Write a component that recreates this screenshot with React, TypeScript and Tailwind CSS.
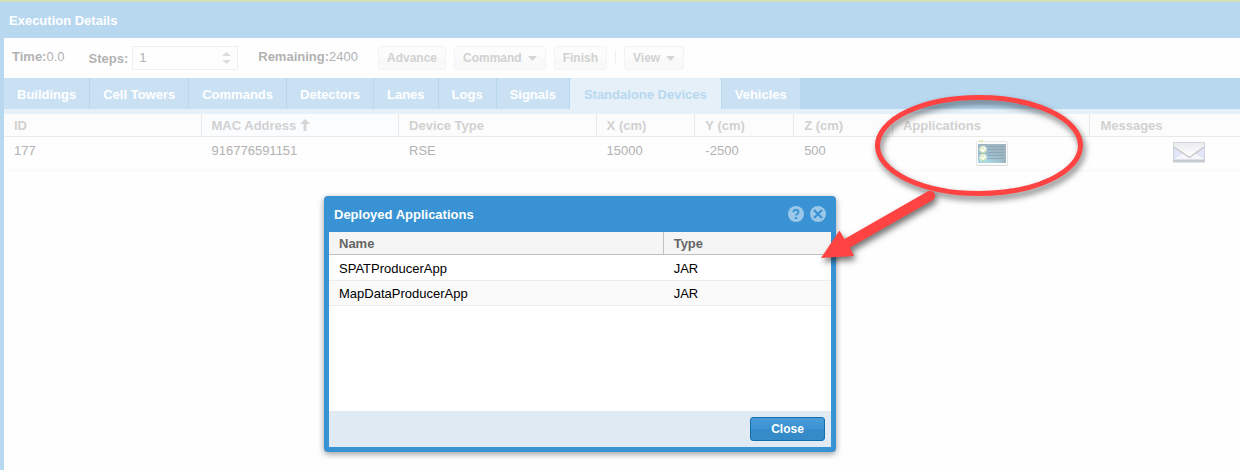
import React from "react";

const tabs = [
  "Buildings",
  "Cell Towers",
  "Commands",
  "Detectors",
  "Lanes",
  "Logs",
  "Signals",
  "Standalone Devices",
  "Vehicles",
];

const columns = [
  { title: "ID", width: "w-2/13" },
  { title: "MAC Address", width: "w-2/13" },
  { title: "Device Type", width: "w-2/13" },
  { title: "X (cm)", width: "w-1/13" },
  { title: "Y (cm)", width: "w-1/13" },
  { title: "Z (cm)", width: "w-1/13" },
  { title: "Applications", width: "w-2/13" },
  { title: "Messages", width: "w-2/13" },
];

const device = ["177", "916776591151", "RSE", "15000", "-2500", "500"];

const apps = [
  { name: "SPATProducerApp", type: "JAR" },
  { name: "MapDataProducerApp", type: "JAR" },
];

function ToolButton({ label, menu = false }: { label: string; menu?: boolean }) {
  return (
    <button
      type="button"
      className="flex h-6 items-center gap-1.5 rounded-[3px] border border-[#f3f3f3] bg-linear-to-b from-[#fcfcfc] from-50% to-[#f9f9f9] to-50% px-2 text-xs font-bold text-[#d1d1d1]"
    >
      {label}
      {menu && (
        <svg width="9" height="5" viewBox="0 0 9 5" aria-hidden="true">
          <path d="M0 0h9L4.500 5z" fill="#d6d6d6" />
        </svg>
      )}
    </button>
  );
}

function ChecklistIcon() {
  return (
    <svg width="32" height="27" viewBox="0 0 32 27" aria-hidden="true">
      <defs>
        <linearGradient id="board" x1="0" y1="0" x2="0" y2="1">
          <stop offset="0" stopColor="#9fb6c3" />
          <stop offset="0.5" stopColor="#9bbdce" />
          <stop offset="1" stopColor="#abdaea" />
        </linearGradient>
        <linearGradient id="shade" x1="0" y1="0" x2="1" y2="0">
          <stop offset="0.4" stopColor="#9fb6c3" stopOpacity="0" />
          <stop offset="1" stopColor="#9fb3c0" />
        </linearGradient>
      </defs>
      <rect x="0.500" y="1.500" width="31" height="24" rx="1" fill="#fbfbfb" stroke="#e6e6e6" />
      <path d="M1 25.500h30" stroke="#d8d8d8" />
      <path d="M3 1h1M5 1h2" stroke="#d2eda0" strokeWidth="2" />
      <rect x="2" y="4" width="28" height="19" fill="url(#board)" />
      <rect x="2" y="4" width="28" height="19" fill="url(#shade)" />
      <path d="M12 6.500h16M12 9.500h16M12 12.500h16M12 15.500h16M12 18.500h16" stroke="#8ea8b6" />
      <circle cx="7" cy="9.500" r="3.200" fill="#dcecc4" stroke="#eef6df" />
      <circle cx="7" cy="17.500" r="3.200" fill="#dcecc4" stroke="#eef6df" />
      <path d="M5.300 9.500l1.500 1.600 3-3.600M5.300 17.500l1.500 1.600 3-3.600" fill="none" stroke="#fff" strokeWidth="1.400" />
      <path d="M4.500 11.500q2.500 2.500 5 0M4.500 19.500q2.500 2.500 5 0" fill="none" stroke="#bfe39b" />
    </svg>
  );
}

function EnvelopeIcon() {
  return (
    <svg width="32" height="21" viewBox="0 0 32 21" aria-hidden="true">
      <defs>
        <linearGradient id="flap" x1="0" y1="0" x2="0" y2="1">
          <stop offset="0" stopColor="#ebecef" />
          <stop offset="1" stopColor="#fff" />
        </linearGradient>
      </defs>
      <rect x="0.500" y="0.500" width="31" height="19" fill="#f5f6fb" stroke="#d0d4dc" />
      <path d="M1 5l9 6.500L1 17zM31 5l-9 6.500 9 5.500z" fill="#e0e6f8" />
      <path d="M1 1h30v4L16.500 15.500 1 5z" fill="url(#flap)" />
      <path d="M1 5l15.500 10.500L31 5" fill="none" stroke="#c4c4c4" strokeWidth="1.200" />
      <path d="M0 18.500h32" stroke="#c4c8cf" strokeWidth="2" />
      <path d="M0 20.500h32" stroke="#e3e4e6" />
    </svg>
  );
}

function DevicePanel() {
  return (
    <main className="flex min-h-screen flex-col border-t-2 border-[#d4dfbc] bg-[#b8d8ef]">
      <h1 className="flex h-9 items-center px-[9px] pt-0.5 text-[13px] font-bold text-white">
        Execution Details
      </h1>
      <div className="ml-1 flex-1 overflow-hidden bg-[#fefefe]">
        <div className="flex h-10 items-center gap-2 pl-2 text-[13px] text-[#b2b2b2]">
          <p className="mb-0.5 mr-4">
            <b>Time:</b>0.0
          </p>
          <label htmlFor="steps" className="-mr-1 pt-0.5 font-bold">
            Steps:
          </label>
          <div className="mr-3 flex h-6 w-[106px] items-center border border-[#efefef] pl-1.5 pr-1.5">
            <input
              id="steps"
              type="number"
              defaultValue={1}
              className="w-full min-w-0 outline-none [appearance:textfield] [&::-webkit-inner-spin-button]:appearance-none"
            />
            <div className="flex flex-col gap-1">
              <button type="button" aria-label="Increase steps">
                <svg width="9" height="4" viewBox="0 0 9 4" className="block">
                  <path d="M0 4h9L4.500 0z" fill="#dcdcdc" />
                </svg>
              </button>
              <button type="button" aria-label="Decrease steps">
                <svg width="9" height="4" viewBox="0 0 9 4" className="block">
                  <path d="M0 0h9L4.500 4z" fill="#dcdcdc" />
                </svg>
              </button>
            </div>
          </div>
          <p className="mb-0.5 mr-3">
            <b>Remaining:</b>2400
          </p>
          <ToolButton label="Advance" />
          <ToolButton label="Command" menu />
          <ToolButton label="Finish" />
          <span className="h-3.5 w-px bg-[#f0f0f0]" />
          <ToolButton label="View" menu />
        </div>

        <div role="tablist" className="flex h-9 gap-px border-b-5 border-[#e5f0f9] bg-[#b8d8ef]">
          {tabs.map((tab) => {
            const active = tab === "Standalone Devices";
            return (
              <button
                key={tab}
                type="button"
                role="tab"
                aria-selected={active}
                className={
                  "rounded-t-[2px] pt-0.5 text-[13px] font-bold " +
                  (active ? "bg-[#e5f0f9] px-3.5 text-[#b8d8ef]" : "bg-[#cae1f4] px-[13px] text-white")
                }
              >
                {tab}
              </button>
            );
          })}
        </div>

        <table className="w-[calc(100%+48px)] table-fixed border-separate border-spacing-0 text-left text-[13px]">
          <thead>
            <tr className="h-[23px] text-[#d1d1d1]">
              {columns.map((column) => (
                <th
                  key={column.title}
                  className={
                    "border-b border-r border-[#eaeaea] pb-0 pl-2.5 pt-0.5 leading-5 " +
                    column.width +
                    (column.title === "MAC Address" ? " bg-[#fafcfe]" : " bg-[#fcfcfc]")
                  }
                >
                  {column.title}
                  {column.title === "MAC Address" && (
                    <svg width="10" height="12" viewBox="0 0 10 12" className="ml-1 inline-block align-[-1px]" aria-hidden="true">
                      <path d="M5 0l5 5H6.500v7h-3V5H0z" fill="#d6d6d6" />
                    </svg>
                  )}
                </th>
              ))}
            </tr>
          </thead>
          <tbody>
            <tr className="h-[34px] align-top text-[#b2b2b2]">
              {device.map((value) => (
                <td key={value} className="border-b border-[#f8f8f8] pl-2.5 pt-1 leading-5">
                  {value}
                </td>
              ))}
              <td className="border-b border-[#f8f8f8] pt-[3px]">
                <button type="button" aria-label="Applications" className="mx-auto block">
                  <ChecklistIcon />
                </button>
              </td>
              <td className="border-b border-[#f8f8f8] pt-[5px]">
                <button type="button" aria-label="Messages" className="mx-auto block">
                  <EnvelopeIcon />
                </button>
              </td>
            </tr>
          </tbody>
        </table>
      </div>
    </main>
  );
}

function DeployedApplications() {
  return (
    <section
      role="dialog"
      aria-labelledby="dialog-title"
      className="absolute left-[324px] top-[196px] flex h-64 w-lg flex-col rounded-[4px] bg-[#3892d3] px-[5px] pb-[5px] shadow-[0_2px_6px_rgba(0,0,0,0.4)]"
    >
      <header className="flex h-9 items-center gap-1.5 px-[5px] text-[13px] font-bold text-white">
        <h2 id="dialog-title" className="flex-1 pt-0.5">
          Deployed Applications
        </h2>
        <button type="button" aria-label="Help">
          <svg width="16" height="16" viewBox="0 0 16 16" className="block">
            <circle cx="8" cy="8" r="8" fill="#9bc8e9" />
            <path d="M5.500 6.300C5.500 3 10.600 3.200 10.500 6c0 1.700-2.400 1.700-2.400 3.600" fill="none" stroke="#3892d3" strokeWidth="2" />
            <path d="M7 11h2.200v2H7z" fill="#3892d3" />
          </svg>
        </button>
        <button type="button" aria-label="Close window">
          <svg width="16" height="16" viewBox="0 0 16 16" className="block">
            <circle cx="8" cy="8" r="8" fill="#9bc8e9" />
            <path d="M4 4l8 8M12 4l-8 8" stroke="#3892d3" strokeWidth="2.200" />
          </svg>
        </button>
      </header>
      <div className="flex-1 bg-white">
        <table className="w-full table-fixed border-separate border-spacing-0 text-left text-[13px]">
          <thead>
            <tr className="h-[23px] bg-[#f5f5f5] text-[#666]">
              <th className="w-2/3 border-b border-r border-[#c0c0c0] pb-0 pl-2.5 pt-0.5 leading-5">Name</th>
              <th className="w-1/3 border-b border-[#c0c0c0] pb-0 pl-2.5 pt-0.5 leading-5">Type</th>
            </tr>
          </thead>
          <tbody className="align-bottom text-black">
            {apps.map((app) => (
              <tr key={app.name} className="h-[25px] first:h-[26px] even:bg-[#fafafa]">
                <td className="border-b border-[#ededed] pb-0 pl-2.5 pt-0.5 leading-[22px]">{app.name}</td>
                <td className="border-b border-[#ededed] pb-0 pl-2.5 pt-0.5 leading-[22px]">{app.type}</td>
              </tr>
            ))}
          </tbody>
        </table>
      </div>
      <footer className="flex h-9 items-center justify-end bg-[#dfeaf2] pr-1.5">
        <button
          type="button"
          className="h-6 w-[75px] rounded-[3px] border border-[#126daf] bg-linear-to-b from-[#4b9cd7] via-[#3892d3] via-50% to-[#358ac8] to-50% text-xs font-bold text-white"
        >
          Close
        </button>
      </footer>
    </section>
  );
}

function Callout() {
  return (
    <svg
      width="280"
      height="190"
      viewBox="0 0 280 190"
      className="pointer-events-none absolute left-[815px] top-[85px] drop-shadow-[2px_4px_3px_rgba(0,0,0,0.55)]"
      aria-hidden="true"
    >
      <ellipse cx="164" cy="60.500" rx="101.500" ry="48" fill="none" stroke="#ff4343" strokeWidth="5" />
      <path
        d="M6 173L24.500 145.500L29.500 154L112.500 106.500A5 5 0 0 1 117.500 115.200L35 162.500L39 171Z"
        fill="#ff4343"
      />
    </svg>
  );
}

export default function App() {
  return (
    <div className="relative overflow-hidden font-['Liberation_Sans',Arial,sans-serif]">
      <DevicePanel />
      <DeployedApplications />
      <Callout />
    </div>
  );
}
